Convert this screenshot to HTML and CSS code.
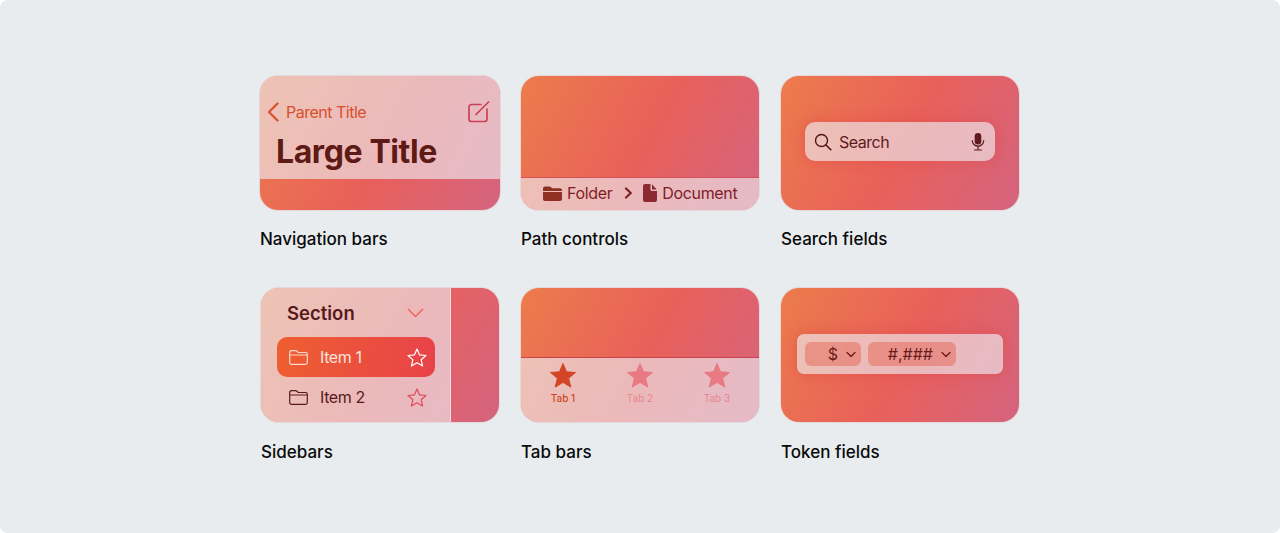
FILE: index.html
```html
<!DOCTYPE html>
<html lang="en">
<head>
    <meta charset="UTF-8">
    <meta name="viewport" content="width=device-width, initial-scale=1.0">
    <title>Bars and fields</title>
    <link rel="stylesheet" href="styles.css">
</head>
<body>
    <div class="gallery">
        <figure class="item item-nav">
            <div class="card card-nav">
                <div class="nav-bar">
                    <div class="nav-top">
                        <svg class="nav-back" width="12" height="20" viewBox="0 0 12 20"><path d="M10.500 1.500 2 10l8.500 8.500" fill="none" stroke="#d94e2e" stroke-width="2.200" stroke-linecap="round" stroke-linejoin="round"/></svg>
                        <span class="nav-parent">Parent Title</span>
                        <svg class="nav-compose" width="22" height="22" viewBox="0 0 22 22"><path d="M13 3.500H3.500a2.500 2.500 0 0 0-2.500 2.500v12a2.500 2.500 0 0 0 2.500 2.500h13a2.500 2.500 0 0 0 2.500-2.500V8" fill="none" stroke="#cc4055" stroke-width="1.700" stroke-linecap="round"/><path d="M8 13.500 20.500 1" fill="none" stroke="#cc4055" stroke-width="1.700" stroke-linecap="round"/></svg>
                    </div>
                    <div class="nav-title">Large Title</div>
                </div>
            </div>
            <figcaption>Navigation bars</figcaption>
        </figure>

        <figure class="item">
            <div class="card card-path">
                <div class="path-bar">
                    <svg width="19" height="15" viewBox="0 0 19 15"><path d="M0 2.500A2 2 0 0 1 2 .5h4.300c.8 0 1.300.3 1.800.8l1 1h7.900A2 2 0 0 1 19 4.300V5H0z" fill="#8f3024"/><path d="M0 6h19v7a2 2 0 0 1-2 2H2a2 2 0 0 1-2-2z" fill="#8f3024"/></svg>
                    <span class="path-label">Folder</span>
                    <svg class="path-sep" width="9" height="12" viewBox="0 0 9 12"><path d="M2 1.500 6.800 6 2 10.500" fill="none" stroke="#7f1d26" stroke-width="2.200" stroke-linecap="round" stroke-linejoin="round"/></svg>
                    <svg width="14" height="18" viewBox="0 0 14 18"><path d="M2 0h5.500v5.500A1.500 1.500 0 0 0 9 7h5v9a2 2 0 0 1-2 2H2a2 2 0 0 1-2-2V2a2 2 0 0 1 2-2z" fill="#8a2a30"/><path d="M9 .3 13.700 5.500H9z" fill="#8a2a30"/></svg>
                    <span class="path-label">Document</span>
                </div>
            </div>
            <figcaption>Path controls</figcaption>
        </figure>

        <figure class="item">
            <div class="card card-center">
                <div class="search-field">
                    <svg width="18" height="18" viewBox="0 0 18 18"><circle cx="7.500" cy="7.500" r="6" fill="none" stroke="#531515" stroke-width="1.400"/><path d="m12 12 4.800 4.800" stroke="#531515" stroke-width="1.600" stroke-linecap="round"/></svg>
                    <span class="search-label">Search</span>
                    <svg class="search-mic" width="14" height="20" viewBox="0 0 14 20"><rect x="3.700" y="1" width="6.600" height="11.500" rx="3.300" fill="#5f1a1e"/><path d="M1.300 8.500a5.700 5.700 0 0 0 11.400 0M7 14.500v3M3.500 18h7" fill="none" stroke="#5f1a1e" stroke-width="1.200" stroke-linecap="round"/></svg>
                </div>
            </div>
            <figcaption>Search fields</figcaption>
        </figure>

        <figure class="item">
            <div class="card card-side">
                <div class="sidebar">
                    <div class="side-head">
                        <span>Section</span>
                        <svg width="17" height="10" viewBox="0 0 17 10"><path d="M1.500 1.500 8.500 8.500l7-7" fill="none" stroke="#ee6a60" stroke-width="1.700" stroke-linecap="round" stroke-linejoin="round"/></svg>
                    </div>
                    <div class="side-row side-row-on">
                        <svg width="19" height="15" viewBox="0 0 19 15"><path d="M.7 12.500V2.500A1.800 1.800 0 0 1 2.500.7h4c.8 0 1.200.3 1.700.8l1 1h7.300a1.800 1.800 0 0 1 1.800 1.800v8.200a1.800 1.800 0 0 1-1.800 1.800H2.500A1.800 1.800 0 0 1 .7 12.500zM.7 5h17.600" fill="none" stroke="#fbd9cf" stroke-width="1.200"/></svg>
                        <span class="side-label">Item 1</span>
                        <svg class="side-star" width="20" height="19" viewBox="0 0 20 19"><path d="m10 1 2.600 5.900 6.400.6-4.900 4.200 1.500 6.300L10 14.700 4.400 18l1.500-6.300L1 7.500l6.400-.6z" fill="none" stroke="#fff" stroke-width="1.200" stroke-linejoin="round"/></svg>
                    </div>
                    <div class="side-row">
                        <svg width="19" height="15" viewBox="0 0 19 15"><path d="M.7 12.500V2.500A1.800 1.800 0 0 1 2.500.7h4c.8 0 1.200.3 1.700.8l1 1h7.300a1.800 1.800 0 0 1 1.800 1.800v8.200a1.800 1.800 0 0 1-1.800 1.800H2.500A1.800 1.800 0 0 1 .7 12.500zM.7 5h17.600" fill="none" stroke="#571a1c" stroke-width="1.200"/></svg>
                        <span class="side-label">Item 2</span>
                        <svg class="side-star" width="20" height="19" viewBox="0 0 20 19"><path d="m10 1 2.600 5.900 6.400.6-4.900 4.200 1.500 6.300L10 14.700 4.400 18l1.500-6.300L1 7.500l6.400-.6z" fill="none" stroke="#e2485a" stroke-width="1.200" stroke-linejoin="round"/></svg>
                    </div>
                </div>
            </div>
            <figcaption>Sidebars</figcaption>
        </figure>

        <figure class="item">
            <div class="card card-tabs">
                <div class="tab-bar">
                    <div class="tab tab-on">
                        <svg width="26" height="25" viewBox="0 0 26 25"><path d="m13 .5 3.500 8.300 9 .7-6.900 5.800 2.200 8.800L13 19.400l-7.800 4.700 2.200-8.800L.5 9.500l9-.7z" fill="currentColor" stroke="currentColor" stroke-linejoin="round"/></svg>
                        <span>Tab 1</span>
                    </div>
                    <div class="tab">
                        <svg width="26" height="25" viewBox="0 0 26 25"><path d="m13 .5 3.500 8.300 9 .7-6.900 5.800 2.200 8.800L13 19.400l-7.800 4.700 2.200-8.800L.5 9.500l9-.7z" fill="currentColor" stroke="currentColor" stroke-linejoin="round"/></svg>
                        <span>Tab 2</span>
                    </div>
                    <div class="tab">
                        <svg width="26" height="25" viewBox="0 0 26 25"><path d="m13 .5 3.500 8.300 9 .7-6.900 5.800 2.200 8.800L13 19.400l-7.800 4.700 2.200-8.800L.5 9.500l9-.7z" fill="currentColor" stroke="currentColor" stroke-linejoin="round"/></svg>
                        <span>Tab 3</span>
                    </div>
                </div>
            </div>
            <figcaption>Tab bars</figcaption>
        </figure>

        <figure class="item">
            <div class="card card-center">
                <div class="token-field">
                    <div class="token token-small">
                        <span>$</span>
                        <svg width="10" height="7" viewBox="0 0 10 7"><path d="M1 1.500 5 5.500l4-4" fill="none" stroke="#6a1c1c" stroke-width="1.300" stroke-linecap="round" stroke-linejoin="round"/></svg>
                    </div>
                    <div class="token token-large">
                        <span>#,###</span>
                        <svg width="10" height="7" viewBox="0 0 10 7"><path d="M1 1.500 5 5.500l4-4" fill="none" stroke="#6a1c1c" stroke-width="1.300" stroke-linecap="round" stroke-linejoin="round"/></svg>
                    </div>
                </div>
            </div>
            <figcaption>Token fields</figcaption>
        </figure>
    </div>
</body>
</html>
```
FILE: styles.css
```css
html {
    background: #ffffff;
}

body {
    margin: 0;
    height: 533px;
    overflow: hidden;
    background: #e8ecef;
    border-radius: 8px;
    font-family: Inter, "Liberation Sans", sans-serif;
    color: #0a0a0a;
    display: flex;
    justify-content: center;
}

.gallery {
    display: grid;
    grid-template-columns: repeat(3, 238px);
    grid-auto-rows: 134px;
    column-gap: 22px;
    row-gap: 78px;
    padding-top: 76px;
}

.item {
    margin: 0;
}

.item figcaption {
    margin-top: 19px;
    font-size: 17px;
    font-weight: 500;
    line-height: 20px;
}

.item:nth-child(n+4) figcaption {
    margin-top: 20px;
}

.item-nav figcaption {
    margin-left: -1px;
}

.card {
    height: 134px;
    border-radius: 18px;
    overflow: hidden;
    box-sizing: border-box;
    background: linear-gradient(118deg, #ec7c4c 0%, #e9605a 52%, #d4647f 100%);
    box-shadow: 0 0 0 1px rgba(222, 170, 170, 0.3);
}

.card-center {
    display: flex;
    align-items: center;
    justify-content: center;
}

/* navigation bar card */
.card-nav {
    width: 240px;
    margin-left: -1px;
}

.nav-bar {
    height: 103px;
    box-sizing: border-box;
    padding: 25px 10px 0 7px;
    background: rgba(238, 238, 242, 0.63);
}

.nav-top {
    display: flex;
    align-items: center;
    height: 22px;
}

.nav-parent {
    margin-left: 7px;
    font-size: 16px;
    letter-spacing: -0.5px;
    color: #d94e2e;
}

.nav-compose {
    margin-left: auto;
}

.nav-title {
    margin: 9px 0 0 9px;
    font-size: 32px;
    line-height: 40px;
    font-weight: 700;
    letter-spacing: -0.4px;
    color: #5e1a15;
}

/* path control card */
.card-path {
    display: flex;
    flex-direction: column;
    justify-content: flex-end;
}

.path-bar {
    height: 33px;
    box-sizing: border-box;
    padding: 0 0 2px 22px;
    display: flex;
    align-items: center;
    background: rgba(238, 238, 242, 0.63);
    border-top: 1px solid #d5505a;
}

.path-label {
    margin-left: 5px;
    font-size: 16px;
    letter-spacing: -0.35px;
    color: #7f1d26;
}

.path-sep {
    margin: 0 10px 0 12px;
}

/* search field card */
.search-field {
    width: 190px;
    height: 39px;
    box-sizing: border-box;
    margin-bottom: 3px;
    padding: 0 10px 0 9px;
    display: flex;
    align-items: center;
    border-radius: 10px;
    background: rgba(238, 238, 242, 0.63);
    box-shadow: 0 0 14px rgba(224, 72, 72, 0.6);
}

.search-label {
    margin-left: 7px;
    font-size: 16px;
    letter-spacing: -0.5px;
    color: #5f1a1e;
}

.search-mic {
    margin-left: auto;
}

/* sidebar card */
.card-side {
    display: flex;
}

.sidebar {
    width: 190px;
    box-sizing: border-box;
    padding: 0 15px 0 16px;
    background: rgba(238, 238, 242, 0.63);
    border-right: 1px solid rgba(255, 255, 255, 0.5);
}

.side-head {
    height: 49px;
    display: flex;
    align-items: center;
    justify-content: space-between;
    padding: 0 11px 0 10px;
    font-size: 18.500px;
    font-weight: 600;
    color: #571a1c;
}

.side-row {
    height: 40px;
    box-sizing: border-box;
    padding: 0 8px 0 12px;
    display: flex;
    align-items: center;
    border-radius: 10px;
    font-size: 16px;
    letter-spacing: -0.4px;
    color: #571a1c;
}

.side-row-on {
    color: #fbe3dc;
    background: linear-gradient(100deg, #ee5f30, #e8424a);
}

.side-label {
    margin-left: 12px;
}

.side-star {
    margin-left: auto;
}

/* tab bar card */
.card-tabs {
    display: flex;
    flex-direction: column;
    justify-content: flex-end;
}

.tab-bar {
    height: 65px;
    box-sizing: border-box;
    display: grid;
    grid-template-columns: repeat(3, 77px);
    justify-content: center;
    background: rgba(238, 238, 242, 0.63);
    border-top: 1px solid #c9414a;
}

.tab {
    display: flex;
    flex-direction: column;
    align-items: center;
    padding-top: 5px;
    font-size: 10px;
    line-height: 13px;
    color: #e97a84;
}

.tab span {
    margin-top: 4px;
    opacity: 0.8;
}

.tab-on {
    color: #d24526;
    font-weight: 500;
}

.tab-on span {
    opacity: 1;
}

/* token field card */
.token-field {
    width: 206px;
    height: 40px;
    box-sizing: border-box;
    margin-bottom: 2px;
    padding: 8px;
    display: flex;
    gap: 7px;
    border-radius: 7px;
    background: rgba(238, 238, 242, 0.63);
    box-shadow: 0 0 14px rgba(224, 72, 72, 0.6);
}

.token {
    height: 24px;
    box-sizing: border-box;
    padding-right: 5px;
    display: flex;
    align-items: center;
    justify-content: flex-end;
    gap: 8px;
    border-radius: 6px;
    font-size: 16px;
    color: #6a1c1c;
    background: rgba(232, 110, 95, 0.55);
}

.token-small {
    width: 56px;
}

.token-large {
    width: 88px;
}
```
